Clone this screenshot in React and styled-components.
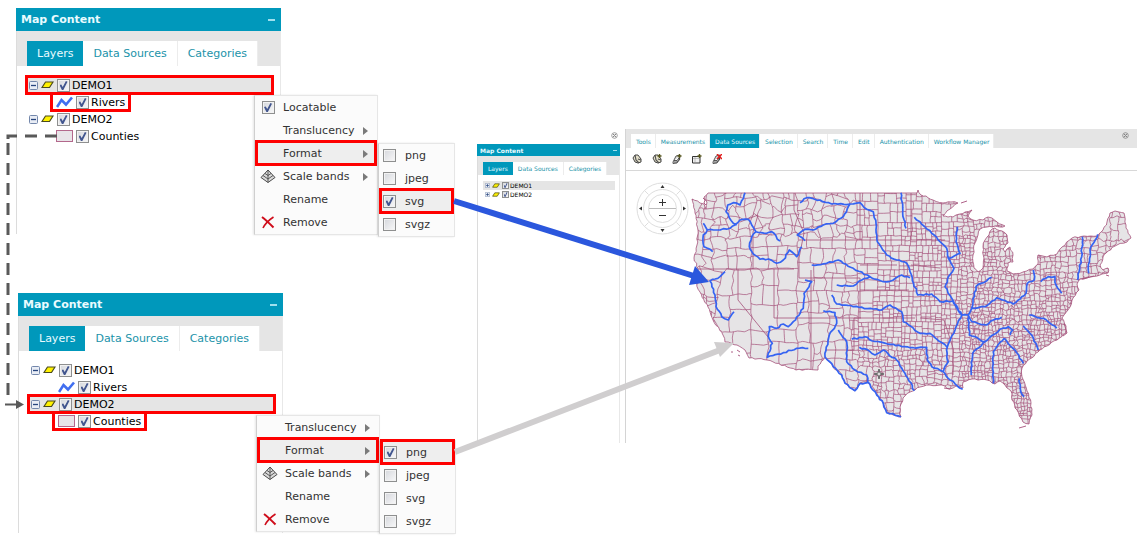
import { useState } from "react";
import styled, { createGlobalStyle } from "styled-components";

const GlobalStyle = createGlobalStyle`
  * {
    box-sizing: border-box;
  }

  body {
    margin: 0;
    background: #ffffff;
    color: #333333;
    font-family: "DejaVu Sans", Verdana, sans-serif;
    font-size: 11px;
  }

  button {
    font: inherit;
    color: inherit;
    background: none;
    border: none;
    padding: 0;
    cursor: pointer;
  }
`;

const Page = styled.main`
  position: relative;
  display: grid;
  grid-template-columns: 461px 143px minmax(0, 1fr);
  align-items: start;
  min-height: 539px;
  overflow: hidden;
`;

const Scenes = styled.div`
  display: flex;
  flex-direction: column;
  gap: 59px;
  padding: 8px 0 0 16px;
`;

const Scene = styled.div`
  position: relative;
  padding-left: ${(p) => (p.$indent ? "2px" : "0")};
`;

const Panel = styled.section`
  width: ${(p) => (p.$small ? "143px" : "265px")};
  min-height: ${(p) => (p.$tall || (p.$small ? 299 : 226))}px;
  font-size: ${(p) => (p.$small ? "6px" : "11px")};
  border-left: 1px solid #dcdcdc;
  border-right: 1px solid #e8e8e8;
`;

const PanelHeader = styled.header`
  display: flex;
  align-items: center;
  justify-content: space-between;
  height: ${(p) => (p.$small ? "12px" : "23px")};
  margin: 0 -1px;
  padding: ${(p) => (p.$small ? "0 3px" : "0 6px 0 5px")};
  background: #0098bb;
  color: #e9fbff;
`;

const PanelTitle = styled.h2`
  margin: 0;
  font-size: inherit;
  font-weight: bold;
`;

const Minimise = styled.button`
  width: ${(p) => (p.$small ? "4px" : "7px")};
  height: ${(p) => (p.$small ? "1px" : "2px")};
  background: #9fe0ee;
`;

const PanelTabs = styled.nav`
  display: flex;
  align-items: flex-end;
  height: ${(p) => (p.$small ? "19px" : "35px")};
  padding-left: ${(p) => (p.$small ? "5px" : "10px")};
  background: #e5e5e5;
`;

const PanelTab = styled.button`
  height: ${(p) => (p.$small ? "13px" : "25px")};
  padding: ${(p) => (p.$small ? "0 5px" : "0 10px")};
  background: ${(p) => (p.$active ? "#0098bb" : "#ffffff")};
  color: ${(p) => (p.$active ? "#e9fbff" : "#1b93a9")};

  & + & {
    border-right: 1px solid #ececec;
  }
`;

const Tree = styled.ul`
  list-style: none;
  margin: 0;
  padding: ${(p) => (p.$small ? "6px 4px 0 5px" : "11px 6px 0 8px")};
`;

const TreeRow = styled.li`
  position: relative;
  display: flex;
  align-items: center;
  gap: ${(p) => (p.$small ? "2px" : "3px")};
  width: ${(p) => (p.$child ? "max-content" : "auto")};
  height: ${(p) => (p.$small ? "9px" : "17px")};
  margin-left: ${(p) => (p.$child ? "25px" : "0")};
  padding: ${(p) => (p.$small ? "0 2px" : p.$child ? "0 6px" : "0 4px")};
  background: ${(p) => (p.$selected ? "#e5e5e5" : "transparent")};
  color: #000000;
`;

const Callout = styled.span`
  position: absolute;
  inset: -2px 0 -1px;
  border: 3px solid #fe0000;
  pointer-events: none;
`;

const CheckLabel = styled.label`
  display: flex;
  align-items: center;
  gap: ${(p) => p.$gap || 2}px;
`;

const CheckBox = styled.input`
  appearance: none;
  display: grid;
  place-items: center;
  flex: none;
  width: ${(p) => (p.$small ? "7px" : "13px")};
  height: ${(p) => (p.$small ? "7px" : "13px")};
  margin: 0;
  background: linear-gradient(135deg, #d5d7dc, #f8f8f9);
  border: 1px solid #8e8f8f;
  box-shadow: ${(p) => (p.$small ? "none" : "inset 0 0 0 1px #f2f2f2")};

  &:checked::after {
    content: "";
    width: ${(p) => (p.$small ? "4px" : "8px")};
    height: ${(p) => (p.$small ? "5px" : "9px")};
    background: #42568f;
    clip-path: polygon(0 45%, 22% 40%, 40% 68%, 80% 0, 100% 8%, 48% 100%, 30% 100%);
  }
`;

const Expander = styled.button`
  flex: none;
  display: grid;
`;

const Menu = styled.div`
  position: absolute;
  left: ${(p) => p.$x}px;
  top: ${(p) => p.$y}px;
  width: ${(p) => p.$width}px;
  background: #fbfbfb;
  border: 1px solid #e6e6e6;
  border-left-color: #cfcfcf;
  box-shadow: -1px 0 2px rgba(0, 0, 0, 0.1);
`;

const MenuItem = styled.div`
  position: relative;
  height: 23px;
  background: ${(p) => (p.$active ? "#eeeeee" : "transparent")};

  > button,
  > label {
    display: grid;
    grid-template-columns: ${(p) => (p.$sub ? "22px 1fr" : "24px 1fr 10px")};
    align-items: center;
    width: 100%;
    height: 23px;
    padding: 0 4px;
    text-align: left;
  }
`;

const MenuIcon = styled.span`
  display: grid;
  place-items: center;
  justify-content: ${(p) => (p.$sub ? "start" : "center")};
  width: 18px;
`;

const SubArrow = styled.span`
  width: 0;
  height: 0;
  border: 4px solid transparent;
  border-left: 5px solid #7a7a7a;
  border-right: 0;
`;

const Sidebar = styled.aside`
  padding-top: 131px;
  margin-left: 16px;
  width: 143px;
`;

const SidebarTop = styled.div`
  display: flex;
  justify-content: flex-end;
  height: 13px;
  padding: 1px 2px;
`;

const Viewer = styled.section`
  margin: 129px 0 0 21px;
  border-left: 1px solid #d4d4d4;
  min-height: 314px;
  font-size: 6px;
`;

const Ribbon = styled.header`
  display: flex;
  justify-content: space-between;
  height: 19px;
  padding: 3px 8px 0 5px;
  background: #e5e5e5;
`;

const RibbonTabs = styled.nav`
  display: flex;
  align-items: flex-end;
`;

const RibbonTab = styled.button`
  height: 14px;
  padding: 0 4px 0 5px;
  white-space: nowrap;
  background: ${(p) => (p.$active ? "#0098bb" : "#ffffff")};
  color: ${(p) => (p.$active ? "#e9fbff" : "#1b93a9")};
  border-right: 1px solid #ececec;
`;

const Toolbar = styled.div`
  display: flex;
  align-items: center;
  gap: 10px;
  height: 23px;
  padding-left: 6px;
  border-bottom: 1px solid #d8d8d8;
`;

const ToolButton = styled.button`
  width: 10px;
  height: 10px;
  display: grid;
`;

const MapArea = styled.div`
  position: relative;

  > svg {
    display: block;
    width: 100%;
    height: auto;
  }
`;

const Navigator = styled.div`
  position: absolute;
  left: 10px;
  top: 11px;
  width: 53px;
  height: 53px;
  display: grid;

  svg,
  div {
    grid-area: 1 / 1;
  }
`;

const ZoomButtons = styled.div`
  display: grid;
  grid-template-rows: 13px 13px;
  place-content: center;
  color: #333333;
`;

const ZoomButton = styled.button`
  width: 24px;
  display: grid;
  place-items: center;
`;

const Arrows = styled.svg`
  position: absolute;
  left: 0;
  top: 0;
  width: 1137px;
  height: 539px;
  pointer-events: none;
`;

/* ---------- icons ---------- */

function ExpandIcon({ small, open }) {
  const size = small ? 5 : 9;
  return (
    <svg width={size} height={size} viewBox="0 0 9 9">
      <rect x=".5" y=".5" width="8" height="8" rx="1" fill="#e9edf5" stroke="#7387ab" />
      <path d={open ? "M2 4.5h5" : "M2 4.5h5M4.5 2v5"} stroke="#27457e" strokeWidth="1.3" />
    </svg>
  );
}

function GroupIcon({ small }) {
  return (
    <svg width={small ? 8 : 13} height={small ? 6 : 9} viewBox="0 0 13 9">
      <path d="M4.500 1h7.500L8.500 6.500H1z" fill="#fff200" stroke="#4b4b1e" strokeWidth="1.2" />
    </svg>
  );
}

function RiverIcon() {
  return (
    <svg width="17" height="13" viewBox="0 0 17 13">
      <path d="M1 11L5.500 4l4.500 4.500 6-7" fill="none" stroke="#416ff0" strokeWidth="2.6" />
    </svg>
  );
}

function CountyIcon() {
  return (
    <svg width="17" height="13" viewBox="0 0 17 13">
      <rect x=".5" y=".5" width="16" height="11" fill="#e8e4e8" stroke="#b3688c" />
    </svg>
  );
}

function ScaleIcon() {
  return (
    <svg width="16" height="15" viewBox="0 0 16 15" fill="none" stroke="#4c4c4c">
      <path d="M8 1L1 8.500l7 5 7-5z" fill="#dadada" strokeLinejoin="round" />
      <path d="M8 1v12.500M5 4.500l3 2 3-2M3 6.500l5 3.500 5-3.500" strokeWidth=".9" />
    </svg>
  );
}

function RemoveIcon() {
  return (
    <svg width="14" height="13" viewBox="0 0 14 13" fill="none" stroke="#cf0d1b">
      <path d="M1 1C5 4 9 8 12.500 11.500" strokeWidth="2" />
      <path d="M12.500 1C8 4 4 8 2 12" strokeWidth="1.600" />
    </svg>
  );
}

function PinIcon() {
  return (
    <svg width="7" height="7" viewBox="0 0 7 7" fill="none" stroke="#777777">
      <circle cx="3.500" cy="3.500" r="2.800" strokeWidth=".7" />
      <path d="M2 2.200l1.500 1L5 2.200M2 4.800l1.500-1 1.500 1" strokeWidth=".9" />
    </svg>
  );
}

function ToolIcon({ kind }) {
  return (
    <svg width="10" height="10" viewBox="0 0 10 10" fill="none" stroke="#333333">
      {(kind === "globe" || kind === "globeAdd") && (
        <>
          <path d="M1 4l2-3 3 0 3 4v3L6 9 3 8z" fill="#e4e0ca" strokeWidth=".9" />
          <path d="M3 1l1 5 3 3M6 5l3 1" stroke="#555555" strokeWidth="1.200" />
        </>
      )}
      {(kind === "stack" || kind === "stackRemove") && (
        <path d="M1 8l3-6 4-1-1 2 1 0-1 2 1 0-3 4-4 .5zM2 6.500l3 0 3-4M2 8l3 0 3-4" fill="#dddddd" strokeWidth=".8" />
      )}
      {kind === "sheet" && (
        <path d="M.500 2.500h7.500v6.500H.500z" fill="#f0f0f0" strokeWidth="1" />
      )}
      {kind === "sheet" && <path d="M1 4.500h6M3 3v6" stroke="#a0a0a0" strokeWidth=".6" />}
      {(kind === "globeAdd" || kind === "sheet" || kind === "stack") && (
        <path d="M7.500 0v4M5.500 2h4" stroke="#55551c" strokeWidth="1.400" />
      )}
      {kind === "stackRemove" && <path d="M5 0l5 5M10 0L5 5" stroke="#e21b1b" strokeWidth="1.500" />}
    </svg>
  );
}

/* ---------- map drawing ---------- */

const OUTLINE =
  "692,199 700,203 704,204 706,209 707,202 704,197 708,193 917,193 918,190 921,195 926,196 933,200 943,203 951,202 958,203 950,209 943,216 948,217 953,217 960,214 965,212 972,210 968,216 973,220 983,220 988,217 992,218 997,222 1005,226 1000,227 995,226 987,227 980,229 978,235 975,243 973,255 974,268 978,272 983,268 984,258 983,247 985,240 989,235 992,229 995,228 1002,231 1007,235 1008,243 1003,249 1005,252 1010,247 1013,255 1013,262 1008,263 1007,271 1013,274 1023,272 1033,269 1038,264 1038,255 1047,257 1057,254 1062,247 1072,238 1084,236 1097,236 1103,230 1107,222 1110,213 1115,211 1119,212 1124,213 1126,228 1131,238 1127,242 1117,245 1108,251 1103,257 1100,265 1103,270 1108,268 1108,273 1102,274 1097,276 1087,278 1080,279 1077,284 1079,290 1073,298 1070,307 1064,315 1062,318 1066,326 1066,333 1057,340 1047,346 1038,352 1027,361 1022,368 1022,377 1027,391 1031,403 1032,415 1029,424 1023,422 1017,410 1012,400 1011,391 1005,385 1000,381 995,384 987,380 972,379 963,382 963,388 956,386 950,389 942,385 930,385 920,387 910,392 903,398 900,407 901,417 893,415 887,412 883,403 875,390 867,382 860,383 855,391 845,383 842,375 833,367 825,357 818,366 818,370 796,370 767,360 749,358 745,350 737,345 725,342 723,335 713,320 708,307 700,292 695,280 698,269 694,258 697,245 698,230 695,213 692,199";

const STATE_LINES = [
  "696,269 794,269", "738,269 738,300 768,337", "774,269 774,318 861,318", "811,270 811,370",
  "794,193 794,210 804,233 799,258 799,278", "740,222 758,215 753,232 753,269",
  "799,240 860,240 860,193", "799,278 860,278 860,318", "860,240 905,240", "860,265 897,265",
  "860,290 909,290", "854,318 915,318", "854,318 854,350 825,350",
  "911,193 911,240 945,240", "911,265 940,268", "920,318 944,320 953,348 953,375",
];

// western part of the sheet: x = px / 3 + 680, y = py / 3 + 180
const RIVERS_WEST = [
  "195,38 185,62 180,75 160,68 143,75 138,95 147,112 160,130 170,135",
  "70,130 82,150 110,150 150,145 165,135 180,120 205,118 215,135 228,155 260,160 275,155 300,183",
  "82,150 70,165 72,200 98,215",
  "228,155 215,170 208,200 220,222 240,238 265,237 290,250 310,240 328,210 350,230 365,200",
  "360,68 380,53 420,60 455,72 510,72 540,68 560,88 580,95 588,130 592,185 620,225 650,240 680,250 690,275 713,345 755,342 780,365 818,363 845,405 865,405",
  "510,72 490,110 460,130 430,135 400,150 375,148 352,165 375,182",
  "395,255 440,250 475,240 520,265 570,290 610,305 640,300 665,285 690,293",
  "470,315 520,318 545,300 570,290",
  "455,345 470,372 520,380 605,390 630,375 665,395 670,425 720,460 750,460 800,500",
  "375,300 395,305 372,340 370,385 340,425 325,440 310,432 290,445 268,440 265,470 277,490 265,520 262,532 310,518 350,505 385,505",
  "135,275 120,290 90,303 105,345 108,380 125,410 145,420 162,395",
  "515,478 555,470 575,482 640,493 690,503 740,502 742,540 755,560 790,575",
  "663,38 668,100 678,145",
  "475,450 500,485 500,545 525,570 560,585 563,605 590,645 610,670 620,698 663,710",
  "430,392 465,398 470,430 448,465 435,530 460,560 485,585 495,610 525,632 540,610 563,608",
  "538,502 560,508 585,525 610,510 650,540 675,580 703,632",
];

// eastern part of the sheet: x = px / 3 + 900, y = py / 3 + 180
const RIVERS_EAST = [
  "43,112 60,125 95,160 120,185 140,205 145,235 162,265 145,290 135,320 155,355 185,405 165,450 142,500 142,540 145,545 130,575 150,600 188,628",
  "172,140 168,185 180,220 145,235",
  "185,405 205,405 215,385 255,380 290,353 340,372 378,340 382,310 403,300 400,270",
  "215,385 228,320 275,292",
  "205,405 215,425 260,435 280,420 305,412",
  "206,410 208,465 255,485 300,448 325,440 338,450 330,465",
  "255,485 218,520 214,585",
  "313,475 280,515 278,560 280,610",
  "313,475 345,510 370,550",
  "388,405 430,415 470,445",
  "370,438 395,465 415,510",
  "422,305 445,290 465,290 468,315 485,340",
  "547,170 545,230 533,300",
  "593,163 570,210 566,280",
  "358,595 362,635 372,650",
];

function noise(a, b, seed) {
  const n = Math.sin(a * 127.1 + b * 311.7 + seed * 74.7) * 43758.5453;
  return n - Math.floor(n);
}

// bilinear noise on a square lattice
function smoothNoise(x, y, pitch, seed) {
  const gx = Math.floor(x / pitch);
  const gy = Math.floor(y / pitch);
  const fx = x / pitch - gx;
  const fy = y / pitch - gy;
  const top = noise(gx, gy, seed) * (1 - fx) + noise(gx + 1, gy, seed) * fx;
  const bottom = noise(gx, gy + 1, seed) * (1 - fx) + noise(gx + 1, gy + 1, seed) * fx;
  return top * (1 - fy) + bottom * fy;
}

function toPoints(text) {
  return text.split(" ").map((pair) => pair.split(",").map(Number));
}

// breaks every leg into short steps and nudges them sideways; long surveyed borders stay straight
function meander(points, amount) {
  const out = [points[0]];
  for (let i = 1; i < points.length; i++) {
    const [x0, y0] = points[i - 1];
    const [x1, y1] = points[i];
    const length = Math.hypot(x1 - x0, y1 - y0);
    const steps = length > 100 ? 1 : Math.max(1, Math.round(length / 3));
    for (let s = 1; s <= steps; s++) {
      const t = s / steps;
      const push = s === steps ? 0 : (noise(x0 + s, y0, 3) - 0.5) * amount;
      out.push([x0 + (x1 - x0) * t - ((y1 - y0) / length) * push, y0 + (y1 - y0) * t + ((x1 - x0) / length) * push]);
    }
  }
  return out;
}

function toPath(points) {
  return "M" + points.map(([x, y]) => `${x.toFixed(1)} ${y.toFixed(1)}`).join("L");
}

function countySize(x, y) {
  if (x > 1100 && y < 235) return 13;
  if (x > 1040 && y < 275) return 7;
  if (x < 712 && y > 290) return 8;
  if (x < 860 && y < 238) return 10;
  if (x < 800) return y > 262 ? 20 : 14;
  if (x < 850) return 14;
  if (x < 872) return y > 320 && y < 365 ? 6 : 11;
  if (x < 905) return y < 270 ? 10 : 6;
  if (x < 960) return y < 225 ? 8 : 6;
  if (y > 300) return 4.4;
  return 5;
}

// plains counties stay square, the rest gets ragged corners
function warp(x, y) {
  if (x > 856 && x < 960 && y < 350) {
    return [x + (smoothNoise(x, y, 4, 1) - 0.5) * 1.2, y + (smoothNoise(x, y, 4, 2) - 0.5) * 1.2];
  }
  const west = x <= 856;
  const pitch = west ? 6 : 3;
  const amount = west ? (y < 240 || x < 725 ? 9 : 4) : 3.4;
  return [
    x + (smoothNoise(x, y, pitch, 1) - 0.5) * amount,
    y + (smoothNoise(x, y, pitch, 2) - 0.5) * amount,
  ];
}

function edge(x0, y0, x1, y1) {
  const steps = Math.max(1, Math.round(Math.hypot(x1 - x0, y1 - y0) / 3));
  const points = [];
  for (let s = 0; s <= steps; s++) {
    points.push(warp(x0 + ((x1 - x0) * s) / steps, y0 + ((y1 - y0) * s) / steps));
  }
  return toPath(points);
}

function splitCounties(x, y, w, h, out) {
  const size = countySize(x + w / 2, y + h / 2);
  if (Math.max(w, h) < size * 1.35) return;
  const ratio = 0.33 + noise(x + w, y + h, 5) * 0.34;
  if (w > h * (0.8 + noise(x, y, 7) * 0.4)) {
    const cut = w * ratio;
    out.push(edge(x + cut, y, x + cut, y + h));
    splitCounties(x, y, cut, h, out);
    splitCounties(x + cut, y, w - cut, h, out);
  } else {
    const cut = h * ratio;
    out.push(edge(x, y + cut, x + w, y + cut));
    splitCounties(x, y, w, cut, out);
    splitCounties(x, y + cut, w, h - cut, out);
  }
}

const countyEdges = [];
splitCounties(690, 188, 444, 242, countyEdges);
const COUNTIES = countyEdges.join("");
const BORDER = toPath(meander(toPoints(OUTLINE), 1.6)) + "Z";
const STATES = STATE_LINES.map((line) => toPath(toPoints(line))).join("");
const RIVERS = [
  ...RIVERS_WEST.map((line) => toPoints(line).map(([x, y]) => [x / 3 + 680, y / 3 + 180])),
  ...RIVERS_EAST.map((line) => toPoints(line).map(([x, y]) => [x / 3 + 900, y / 3 + 180])),
]
  .map((points) => toPath(meander(points, 1.6)))
  .join("");

function CountyMap() {
  return (
    <svg viewBox="626 171 511 271" role="img" aria-label="Counties and rivers">
      <clipPath id="land">
        <path d={BORDER} />
      </clipPath>
      <path d={BORDER} fill="#e6e4e6" />
      <g fill="none" stroke="#a5507a">
        <path d={COUNTIES} strokeWidth=".7" clipPath="url(#land)" />
        <path d={STATES} strokeWidth=".8" clipPath="url(#land)" />
        <path d={BORDER} strokeWidth=".8" />
        <path
          d="M731 352h2M737 350l3 2M738 355l2 1M961 203l6-2M703 198l2 2-1 3 2 2M1019 428l7-2M1082 279l12-3M1064 323l3 10-4 3M944 388l6 1M1106 275l3 1"
          strokeWidth=".9"
        />
      </g>
      <path d={RIVERS} fill="none" stroke="#3563f2" strokeWidth="1.7" strokeLinejoin="round" />
      <g stroke="#555555" fill="#dddddd" strokeWidth=".9">
        <path d="M879 369l1 4 4 1-4 1-1 4-1-4-4-1 4-1z" />
      </g>
    </svg>
  );
}

function MapNavigator() {
  return (
    <Navigator>
      <svg width="53" height="53" viewBox="0 0 53 53" fill="none" stroke="#dedede">
        <circle cx="26.500" cy="26.500" r="25.500" />
        <circle cx="26.500" cy="26.500" r="19" />
        <circle cx="26.500" cy="26.500" r="14" />
        <path d="M8.500 8.500l4 4M44.500 8.500l-4 4M8.500 44.500l4-4M44.500 44.500l-4-4" />
        <path d="M13 26.500h27" stroke="#bcbcbc" />
        <path d="M26.500 3l2 3h-4zM26.500 50l2-3h-4zM3 26.500l3-2v4zM50 26.500l-3-2v4z" fill="#333333" stroke="none" />
      </svg>
      <ZoomButtons>
        <ZoomButton aria-label="Zoom in">
          <svg width="7" height="7" viewBox="0 0 7 7" stroke="#333333">
            <path d="M0 3.500h7M3.500 0v7" />
          </svg>
        </ZoomButton>
        <ZoomButton aria-label="Zoom out">
          <svg width="7" height="7" viewBox="0 0 7 7" stroke="#333333">
            <path d="M0 3.500h7" />
          </svg>
        </ZoomButton>
      </ZoomButtons>
    </Navigator>
  );
}

/* ---------- panels ---------- */

function Check({ label, small, gap, checked = true }) {
  const [on, setOn] = useState(checked);
  return (
    <CheckLabel $gap={gap}>
      <CheckBox type="checkbox" $small={small} checked={on} onChange={() => setOn(!on)} />
      {label}
    </CheckLabel>
  );
}

function ContentPanel({ small, height, children }) {
  return (
    <Panel $small={small} $tall={height}>
      <PanelHeader $small={small}>
        <PanelTitle>Map Content</PanelTitle>
        <Minimise $small={small} aria-label="Minimise" />
      </PanelHeader>
      <PanelTabs $small={small}>
        <PanelTab $small={small} $active>Layers</PanelTab>
        <PanelTab $small={small}>Data Sources</PanelTab>
        <PanelTab $small={small}>Categories</PanelTab>
      </PanelTabs>
      <Tree $small={small}>{children}</Tree>
    </Panel>
  );
}

function Group({ name, small, open, selected, marked }) {
  return (
    <TreeRow $small={small} $selected={selected}>
      <Expander aria-label={`Toggle ${name}`}>
        <ExpandIcon small={small} open={open} />
      </Expander>
      <GroupIcon small={small} />
      <Check label={name} small={small} gap={small ? 1 : 2} />
      {marked && <Callout />}
    </TreeRow>
  );
}

function Layer({ name, icon, marked }) {
  return (
    <TreeRow $child>
      {icon}
      <Check label={name} />
      {marked && <Callout />}
    </TreeRow>
  );
}

function MenuCheck({ name, checked, marked, sub }) {
  const [on, setOn] = useState(Boolean(checked));
  return (
    <MenuItem $active={marked} $sub={sub}>
      <label>
        <MenuIcon $sub={sub}>
          <CheckBox type="checkbox" checked={on} onChange={() => setOn(!on)} />
        </MenuIcon>
        {name}
      </label>
      {marked && <Callout />}
    </MenuItem>
  );
}

function MenuAction({ name, icon, arrow, marked }) {
  return (
    <MenuItem $active={marked}>
      <button>
        <MenuIcon>{icon}</MenuIcon>
        {name}
        {arrow && <SubArrow />}
      </button>
      {marked && <Callout />}
    </MenuItem>
  );
}

function LayerMenu({ x, y, locatable }) {
  return (
    <Menu $x={x} $y={y} $width={124}>
      {locatable && <MenuCheck name="Locatable" checked />}
      <MenuAction name="Translucency" arrow />
      <MenuAction name="Format" arrow marked />
      <MenuAction name="Scale bands" icon={<ScaleIcon />} arrow />
      <MenuAction name="Rename" />
      <MenuAction name="Remove" icon={<RemoveIcon />} />
    </Menu>
  );
}

function FormatMenu({ x, y, format }) {
  return (
    <Menu $x={x} $y={y} $width={77}>
      {["png", "jpeg", "svg", "svgz"].map((name) => (
        <MenuCheck key={name} name={name} sub checked={name === format} marked={name === format} />
      ))}
    </Menu>
  );
}

const RIBBON = [
  "Tools", "Measurements", "Data Sources", "Selection", "Search",
  "Time", "Edit", "Authentication", "Workflow Manager",
];

const TOOLS = [
  ["globe", "Add source"],
  ["globeAdd", "Add service"],
  ["stack", "Add layers"],
  ["sheet", "Add table"],
  ["stackRemove", "Remove layers"],
];

export default function App() {
  return (
    <Page>
      <GlobalStyle />
      <Scenes>
        <Scene>
          <ContentPanel>
            <Group name="DEMO1" open selected marked />
            <Layer name="Rivers" icon={<RiverIcon />} marked />
            <Group name="DEMO2" open />
            <Layer name="Counties" icon={<CountyIcon />} />
          </ContentPanel>
          <LayerMenu x={238} y={87} locatable />
          <FormatMenu x={362} y={135} format="svg" />
        </Scene>
        <Scene $indent>
          <ContentPanel height={240}>
            <Group name="DEMO1" open />
            <Layer name="Rivers" icon={<RiverIcon />} />
            <Group name="DEMO2" open selected marked />
            <Layer name="Counties" icon={<CountyIcon />} marked />
          </ContentPanel>
          <LayerMenu x={240} y={122} />
          <FormatMenu x={363} y={147} format="png" />
        </Scene>
      </Scenes>

      <Sidebar>
        <SidebarTop>
          <PinIcon />
        </SidebarTop>
        <ContentPanel small>
          <Group name="DEMO1" small selected />
          <Group name="DEMO2" small />
        </ContentPanel>
      </Sidebar>

      <Viewer>
        <Ribbon>
          <RibbonTabs>
            {RIBBON.map((name) => (
              <RibbonTab key={name} $active={name === "Data Sources"}>{name}</RibbonTab>
            ))}
          </RibbonTabs>
          <PinIcon />
        </Ribbon>
        <Toolbar>
          {TOOLS.map(([kind, label]) => (
            <ToolButton key={kind} aria-label={label}>
              <ToolIcon kind={kind} />
            </ToolButton>
          ))}
        </Toolbar>
        <MapArea>
          <CountyMap />
          <MapNavigator />
        </MapArea>
      </Viewer>

      <Arrows viewBox="0 0 1137 539" fill="none" aria-hidden="true">
        <g stroke="#595959" strokeWidth="3" strokeDasharray="12 8">
          <path d="M57 136H8v3" />
          <path d="M8 143v254" />
        </g>
        <path d="M5 404.500h12" stroke="#595959" strokeWidth="2" />
        <path d="M16 400l8 4.500-8 4.500z" fill="#595959" />
        <path d="M454 201L694 276" stroke="#2b57dd" strokeWidth="6" />
        <path d="M695 266l14 16-20 3z" fill="#2b57dd" />
        <path d="M455 452L720 350" stroke="#d0cecf" strokeWidth="6" />
        <path d="M714 342l20 1-14 14z" fill="#d0cecf" />
      </Arrows>
    </Page>
  );
}
